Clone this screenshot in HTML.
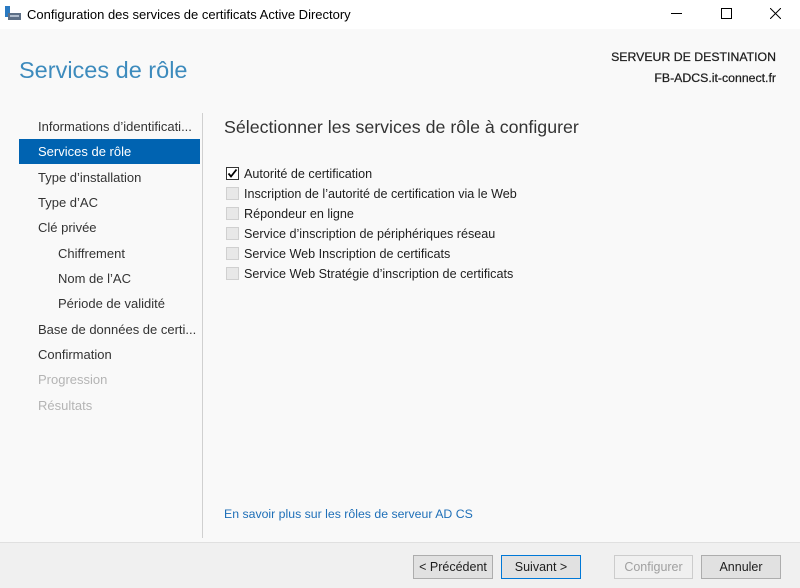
<!DOCTYPE html>
<html><head><meta charset="utf-8"><style>
body{margin:0;width:800px;height:587px;overflow:hidden;font-family:"Liberation Sans",sans-serif;background:#f9f9f9;position:relative;color:#1e1e1e}
.a{position:absolute;white-space:nowrap}
.tb{position:absolute;left:0;top:0;width:800px;height:29px;background:#fff}
.nav{font-size:13px;color:#333}
.cb{position:absolute;width:13px;height:13px;border:1px solid #d0d0d0;background:#e8e8e8;box-sizing:border-box}
.lbl{font-size:12.6px;color:#1e1e1e}
.btn{position:absolute;top:555px;height:24px;box-sizing:border-box;border:1px solid #adadad;background:#e1e1e1;font-size:12.5px;text-align:center;line-height:22px}
</style></head><body>
<div class="tb"></div>
<svg class="a" style="left:4px;top:6px" width="18" height="16"><rect x="1" y="0" width="5" height="11" fill="#2a7ac2"/><rect x="4" y="7" width="13" height="7" fill="#5d6f86"/><rect x="6" y="9" width="9" height="2" fill="#b0bccc"/></svg>
<div class="a" style="left:27px;top:7px;font-size:13px;color:#000">Configuration des services de certificats Active Directory</div>
<div class="a" style="left:671px;top:13px;width:11px;height:1px;background:#000"></div>
<div class="a" style="left:721px;top:8px;width:9px;height:9px;border:1px solid #000"></div>
<svg class="a" style="left:770px;top:8px" width="11" height="11"><path d="M0 0L11 11M11 0L0 11" stroke="#000" stroke-width="1"/></svg>
<div class="a" style="left:19px;top:57px;font-size:23.5px;color:#3d8bbd">Services de rôle</div>
<div class="a" style="right:24px;top:47px;font-size:12.3px;color:#1e1e1e;text-align:right;line-height:21px;-webkit-text-stroke:0.25px #1e1e1e">SERVEUR DE DESTINATION<br>FB-ADCS.it-connect.fr</div>
<div class="a" style="left:202px;top:113px;width:1px;height:425px;background:#d0d0d0"></div>
<div class="a" style="left:19px;top:139px;width:181px;height:25px;background:#0063b1"></div>
<div class="a nav" style="left:38px;top:119px">Informations d’identificati...</div>
<div class="a nav" style="left:38px;top:144px;color:#fff">Services de rôle</div>
<div class="a nav" style="left:38px;top:170px">Type d’installation</div>
<div class="a nav" style="left:38px;top:195px">Type d’AC</div>
<div class="a nav" style="left:38px;top:220px">Clé privée</div>
<div class="a nav" style="left:58px;top:246px">Chiffrement</div>
<div class="a nav" style="left:58px;top:271px">Nom de l’AC</div>
<div class="a nav" style="left:58px;top:296px">Période de validité</div>
<div class="a nav" style="left:38px;top:322px">Base de données de certi...</div>
<div class="a nav" style="left:38px;top:347px">Confirmation</div>
<div class="a nav" style="left:38px;top:372px;color:#b4b4b4">Progression</div>
<div class="a nav" style="left:38px;top:398px;color:#b4b4b4">Résultats</div>
<div class="a" style="left:224px;top:117px;font-size:17.8px;color:#333">Sélectionner les services de rôle à configurer</div>
<div class="cb" style="left:226px;top:167px;background:#fff;border-color:#333"></div>
<svg class="a" style="left:227px;top:168px" width="11" height="11"><path d="M1.5 5.5L4 8.5L9.5 1.5" stroke="#000" stroke-width="1.8" fill="none"/></svg>
<div class="a lbl" style="left:244px;top:167px">Autorité de certification</div>
<div class="cb" style="left:226px;top:187px"></div><div class="a lbl" style="left:244px;top:187px">Inscription de l’autorité de certification via le Web</div>
<div class="cb" style="left:226px;top:207px"></div><div class="a lbl" style="left:244px;top:207px">Répondeur en ligne</div>
<div class="cb" style="left:226px;top:227px"></div><div class="a lbl" style="left:244px;top:227px">Service d’inscription de périphériques réseau</div>
<div class="cb" style="left:226px;top:247px"></div><div class="a lbl" style="left:244px;top:247px">Service Web Inscription de certificats</div>
<div class="cb" style="left:226px;top:267px"></div><div class="a lbl" style="left:244px;top:267px">Service Web Stratégie d’inscription de certificats</div>
<div class="a" style="left:224px;top:507px;font-size:12.3px;color:#1e6fb8">En savoir plus sur les rôles de serveur AD CS</div>
<div class="a" style="left:0;top:542px;width:800px;height:45px;background:#f0f0f0;border-top:1px solid #e0e0e0"></div>
<div class="btn" style="left:413px;width:80px">&lt; Précédent</div>
<div class="btn" style="left:501px;width:80px;border-color:#0078d7">Suivant &gt;</div>
<div class="btn" style="left:614px;width:79px;border-color:#ccc;background:#f0f0f0;color:#a0a0a0">Configurer</div>
<div class="btn" style="left:701px;width:80px">Annuler</div>
</body></html>
